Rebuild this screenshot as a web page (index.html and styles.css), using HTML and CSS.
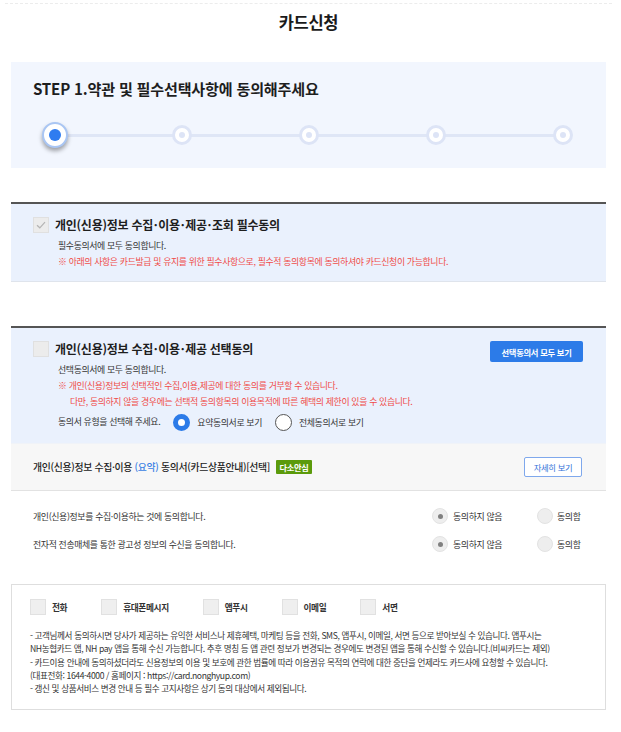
FILE: index.html
```html
<!DOCTYPE html>
<html lang="ko">
<head>
<meta charset="utf-8">
<title>카드신청</title>
<link rel="stylesheet" href="styles.css">
</head>
<body>
<div class="page">
  <header class="header">
    <div class="topline"></div>
    <h1 class="title">카드신청</h1>
  </header>

  <section class="stepbox">
    <h2 class="step-title">STEP 1.약관 및 필수선택사항에 동의해주세요</h2>
    <div class="steps">
      <div class="step"><span class="dot dot-active"></span></div>
      <div class="step"><span class="dot"></span></div>
      <div class="step"><span class="dot"></span></div>
      <div class="step"><span class="dot"></span></div>
      <div class="step"><span class="dot"></span></div>
    </div>
  </section>

  <section class="agree agree-req">
    <div class="agree-head">
      <div class="agree-left">
        <span class="chk chk-on"><svg width="10" height="8" viewBox="0 0 10 8"><path d="M1 4.2 L3.8 6.8 L9 1.2" fill="none" stroke="#b4b4b4" stroke-width="1.2"/></svg></span>
        <h3 class="agree-title">개인(신용)정보 수집<span class="md">·</span>이용<span class="md">·</span>제공<span class="md">·</span>조회 필수동의</h3>
      </div>
    </div>
    <div class="desc">
      <p class="line">필수동의서에 모두 동의합니다.</p>
      <p class="line red">※ 아래의 사항은 카드발급 및 유지를 위한 필수사항으로, 필수적 동의항목에 동의하셔야 카드신청이 가능합니다.</p>
    </div>
  </section>

  <section class="agree agree-opt">
    <div class="agree-head">
      <div class="agree-left">
        <span class="chk"></span>
        <h3 class="agree-title">개인(신용)정보 수집<span class="md">·</span>이용<span class="md">·</span>제공 선택동의</h3>
      </div>
      <button class="btn-blue">선택동의서 모두 보기</button>
    </div>
    <div class="desc">
      <p class="line">선택동의서에 모두 동의합니다.</p>
      <p class="line red">※ 개인(신용)정보의 선택적인 수집,이용,제공에 대한 동의를 거부할 수 있습니다.</p>
      <p class="line red indent">다만, 동의하지 않을 경우에는 선택적 동의항목의 이용목적에 따른 혜택의 제한이 있을 수 있습니다.</p>
      <div class="type-row">
        <span class="line">동의서 유형을 선택해 주세요.</span>
        <label class="type-opt"><span class="radio-blue on"></span><span>요약동의서로 보기</span></label>
        <label class="type-opt"><span class="radio-blue"></span><span>전체동의서로 보기</span></label>
      </div>
    </div>
  </section>

  <div class="sub">
    <div class="sub-title">개인(신용)정보 수집·이용 <span class="blue">(요약)</span> 동의서(카드상품안내)[선택] <span class="badge">다소안심</span></div>
    <button class="btn-outline">자세히 보기</button>
  </div>

  <div class="rows">
    <div class="row">
      <span class="row-text">개인(신용)정보를 수집·이용하는 것에 동의합니다.</span>
      <div class="opts">
        <label class="opt opt-no"><span class="radio on"></span><span>동의하지 않음</span></label>
        <label class="opt opt-yes"><span class="radio"></span><span>동의함</span></label>
      </div>
    </div>
    <div class="row">
      <span class="row-text">전자적 전송매체를 통한 광고성 정보의 수신을 동의합니다.</span>
      <div class="opts">
        <label class="opt opt-no"><span class="radio on"></span><span>동의하지 않음</span></label>
        <label class="opt opt-yes"><span class="radio"></span><span>동의함</span></label>
      </div>
    </div>
  </div>

  <section class="channels">
    <div class="ch-row">
      <label class="ch"><span class="chk"></span><span>전화</span></label>
      <label class="ch"><span class="chk"></span><span>휴대폰메시지</span></label>
      <label class="ch"><span class="chk"></span><span>앱푸시</span></label>
      <label class="ch"><span class="chk"></span><span>이메일</span></label>
      <label class="ch"><span class="chk"></span><span>서면</span></label>
    </div>
    <p class="notes">- 고객님께서 동의하시면 당사가 제공하는 유익한 서비스나 제휴혜택, 마케팅 등을 전화, SMS, 앱푸시, 이메일, 서면 등으로 받아보실 수 있습니다. 앱푸시는<br>NH농협카드 앱, NH pay 앱을 통해 수신 가능합니다. 추후 명칭 등 앱 관련 정보가 변경되는 경우에도 변경된 앱을 통해 수신할 수 있습니다.(비씨카드는 제외)<br>- 카드이용 안내에 동의하셨더라도 신용정보의 이용 및 보호에 관한 법률에 따라 이용권유 목적의 연락에 대한 중단을 언제라도 카드사에 요청할 수 있습니다.<br>(대표전화: 1644-4000 / 홈페이지 : https://card.nonghyup.com)<br>- 갱신 및 상품서비스 변경 안내 등 필수 고지사항은 상기 동의 대상에서 제외됩니다.</p>
  </section>
</div>
</body>
</html>
```

FILE: styles.css
```css
* { box-sizing: border-box; }
html, body { margin: 0; padding: 0; background: #fff; }
body {
  width: 621px;
  font-family: "Noto Sans CJK KR", "Noto Sans", sans-serif;
  color: #222;
}
p, h1, h2, h3 { margin: 0; }
button { font-family: inherit; cursor: pointer; }

.page { padding: 0 15px 0 11px; }

.header { height: 62px; padding-top: 3px; }
.topline { border-top: 1px dashed #ececec; margin: 0 -6px; }
.title {
  margin-top: 3px;
  line-height: 30px;
  font-size: 16.5px;
  font-weight: 700;
  text-align: center;
  letter-spacing: -0.3px;
  color: #1a1a1a;
}

.stepbox {
  background: #f2f6fe;
  padding: 16px 0 20px 22px;
}
.step-title {
  font-size: 15.1px;
  line-height: 20px;
  font-weight: 700;
  color: #1e1e1e;
  letter-spacing: -0.2px;
}
.steps {
  position: relative;
  margin: 24px 0 0 9px;
  width: 534px;
  height: 26px;
  display: flex;
  justify-content: space-between;
  align-items: center;
}
.steps::before {
  content: "";
  position: absolute;
  left: 13px; right: 13px; top: 12px;
  height: 3px;
  background: #dfe6f6;
}
.step {
  position: relative;
  width: 26px; height: 26px;
  display: flex; align-items: center; justify-content: center;
}
.dot {
  width: 20px; height: 20px;
  border-radius: 50%;
  background: #fff;
  border: 3px solid #dde4f6;
  display: flex; align-items: center; justify-content: center;
}
.dot::after {
  content: "";
  width: 6px; height: 6px;
  border-radius: 50%;
  background: #dde4f6;
}
.dot-active {
  width: 26px; height: 26px;
  border: 2px solid #aac6f3;
  box-shadow: 0 3px 4px rgba(0, 0, 0, 0.35);
}
.dot-active::after {
  width: 12px; height: 12px;
  background: #2f7cf0;
}

.agree {
  background: #eaf1fd;
  border-top: 2px solid #555;
  padding: 11px 23px 12px 22px;
}
.agree-req { margin-top: 34px; border-bottom: 1px solid #dfe4ec; padding-bottom: 11px; }
.agree-opt { margin-top: 44px; }
.agree-head { display: flex; justify-content: space-between; align-items: flex-start; }
.agree-left { display: flex; align-items: center; gap: 6px; height: 20px; }
.agree-title {
  font-size: 12px;
  line-height: 20px;
  font-weight: 700;
  color: #1e1e1e;
  letter-spacing: -0.25px;
  white-space: nowrap;
}
.md { margin: 0 0.8px; }

.chk {
  width: 16px; height: 16px;
  flex: none;
  background: #ececec;
  border: 1px solid #e0e0e0;
  display: flex; align-items: center; justify-content: center;
}

.btn-blue {
  margin-top: 2px;
  width: 93px; height: 21px;
  padding: 0;
  border: 0;
  border-radius: 2px;
  background: #2c7be8;
  color: #fff;
  font-size: 8.3px;
  font-weight: 700;
  letter-spacing: -0.3px;
}

.desc { padding-left: 25px; margin-top: 3px; }
.agree-opt .desc { margin-top: 0; }
.line {
  font-size: 8.9px;
  line-height: 16px;
  letter-spacing: -0.35px;
  color: #333;
  white-space: nowrap;
}
.red { color: #f04b48; }
.indent { padding-left: 12px; }

.type-row {
  display: flex;
  align-items: center;
  height: 18px;
  margin-top: 3px;
}
.type-opt {
  display: flex; align-items: center; gap: 7px;
  margin-left: 13px;
  font-size: 8.9px;
  letter-spacing: -0.35px;
  color: #333;
}
.radio-blue {
  width: 17px; height: 17px;
  border-radius: 50%;
  background: #fff;
  border: 1px solid #555;
}
.radio-blue.on { border: 5px solid #2c7be8; }

.sub {
  height: 48px;
  background: #f7f7f7;
  border-top: 1px solid #f0f3f8;
  border-bottom: 1px solid #e2e2e2;
  padding: 0 24px 0 22px;
  display: flex;
  align-items: center;
  justify-content: space-between;
}
.sub-title {
  font-size: 9.85px;
  font-weight: 500;
  letter-spacing: -0.3px;
  color: #222;
  display: flex; align-items: center;
  white-space: pre;
}
.blue { color: #3a7fe4; }
.badge {
  margin-left: 3px;
  height: 14px;
  padding: 0 4px;
  background: #5b9a0b;
  color: #fff;
  font-size: 8.2px;
  font-weight: 700;
  line-height: 14px;
  border-radius: 1px;
}
.btn-outline {
  width: 58px; height: 20px;
  padding: 0;
  background: #fff;
  border: 1px solid #7fa8ec;
  border-radius: 2px;
  color: #2f6fd8;
  font-size: 8.3px;
  letter-spacing: -0.3px;
}

.rows { padding-top: 15px; }
.row {
  display: flex;
  align-items: center;
  height: 20px;
  padding-left: 22px;
  margin-bottom: 8px;
}
.row:last-child { margin-bottom: 0; }
.row-text {
  flex: 1;
  font-size: 8.9px;
  letter-spacing: -0.35px;
  color: #333;
}
.opts { display: flex; width: 174px; }
.opt {
  display: flex; align-items: center; gap: 5px;
  font-size: 8.9px;
  letter-spacing: -0.35px;
  color: #333;
}
.opt-no { width: 105px; }
.opt-yes { gap: 4px; }
.radio {
  width: 16px; height: 16px;
  border-radius: 50%;
  background: #eeeeee;
  border: 1px solid #e3e3e3;
  display: flex; align-items: center; justify-content: center;
}
.radio.on::after {
  content: "";
  width: 5px; height: 5px;
  border-radius: 50%;
  background: #808080;
}

.channels {
  margin-top: 30px;
  border: 1px solid #dedede;
  padding: 14px 0 14px 18px;
}
.ch-row { display: flex; gap: 34px; height: 16px; }
.ch {
  display: flex; align-items: center; gap: 6px;
  font-size: 8.7px;
  font-weight: 700;
  letter-spacing: -0.4px;
  color: #333;
}
.ch .chk { background: #efefef; border-color: #e1e1e1; }
.notes {
  margin-top: 14px;
  font-size: 8.6px;
  line-height: 13.3px;
  letter-spacing: -0.4px;
  color: #333;
  white-space: nowrap;
}
```
